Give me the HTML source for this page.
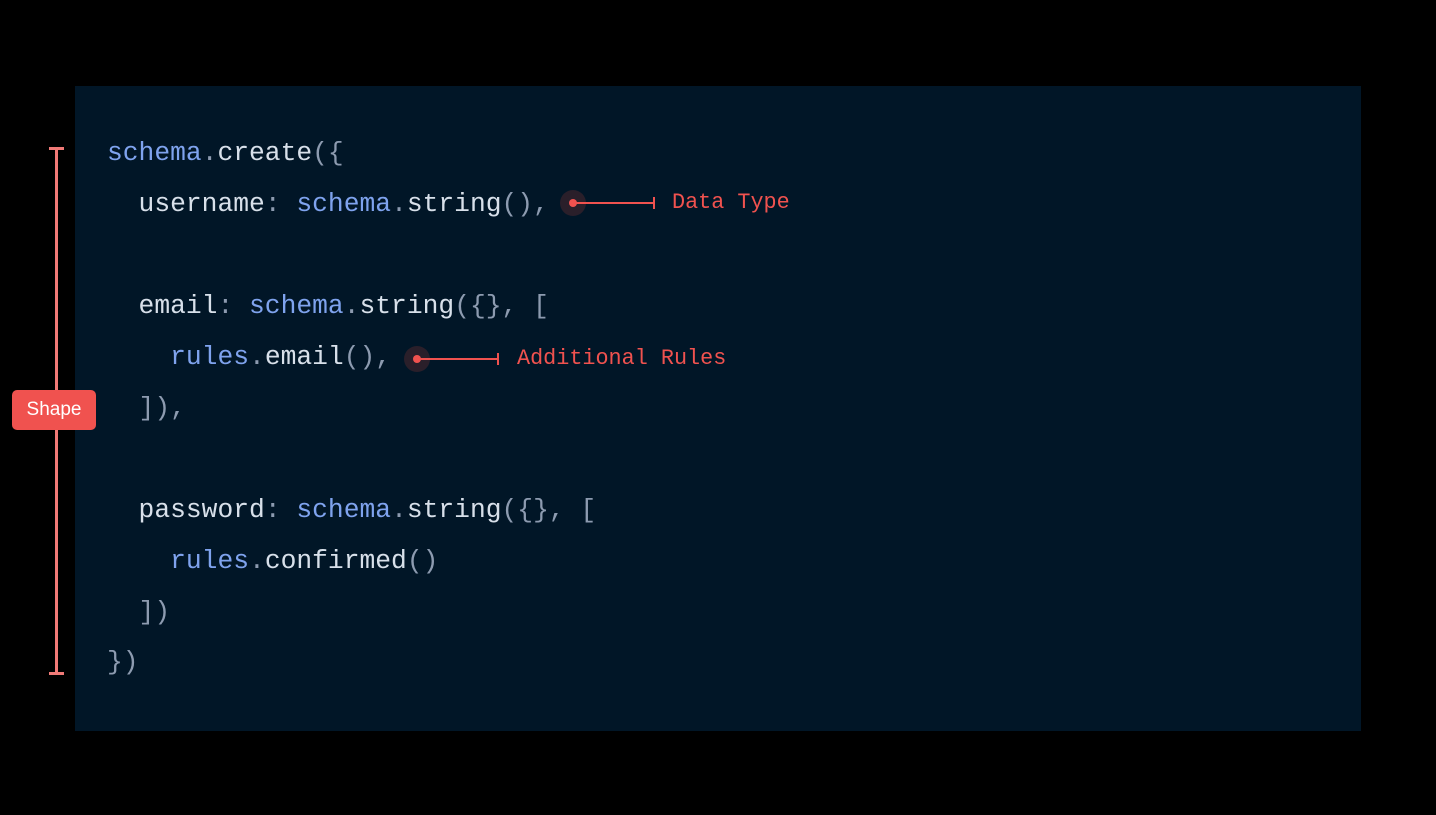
<!DOCTYPE html>
<html><head><meta charset="utf-8"><style>
html,body{margin:0;padding:0;background:#000;width:1436px;height:815px;overflow:hidden;position:relative}
.panel{position:absolute;left:75px;top:86px;width:1286px;height:645px;background:#011627}
.code{position:absolute;left:107px;top:1px;font-family:"Liberation Mono",monospace;font-size:26.3px;color:#d8e0ea;white-space:pre}
.l{position:absolute;left:0;height:51px;line-height:51px}
.b{color:#7fa3ee}.p{color:#8d9bb0}
.ann{position:absolute;font-family:"Liberation Mono",monospace;font-size:21.8px;color:#f0524f;white-space:pre;line-height:24px}
.dot{position:absolute;width:26px;height:26px;border-radius:50%;background:#2a1f2a}
.dot:after{content:"";position:absolute;left:9px;top:9px;width:8px;height:8px;border-radius:50%;background:#f0524f}
.ln{position:absolute;height:2px;background:#f0524f}
.tick{position:absolute;width:2px;height:12px;background:#f0524f}
.br{position:absolute;background:#f07a77}
.shape{position:absolute;left:12px;top:390px;width:84px;height:40px;border-radius:5px;background:#f0524f;color:#fff;font-family:"Liberation Sans",sans-serif;font-size:19px;line-height:40px;text-align:center}
</style></head><body>
<div class="panel"></div>
<div class="code">
<div class="l" style="top:127px"><span class="b">schema</span><span class="p">.</span>create<span class="p">({</span></div>
<div class="l" style="top:178px">  username<span class="p">:</span> <span class="b">schema</span><span class="p">.</span>string<span class="p">(),</span></div>
<div class="l" style="top:280px">  email<span class="p">:</span> <span class="b">schema</span><span class="p">.</span>string<span class="p">({}, [</span></div>
<div class="l" style="top:331px">    <span class="b">rules</span><span class="p">.</span>email<span class="p">(),</span></div>
<div class="l" style="top:382px"><span class="p">  ]),</span></div>
<div class="l" style="top:484px">  password<span class="p">:</span> <span class="b">schema</span><span class="p">.</span>string<span class="p">({}, [</span></div>
<div class="l" style="top:535px">    <span class="b">rules</span><span class="p">.</span>confirmed<span class="p">()</span></div>
<div class="l" style="top:586px"><span class="p">  ])</span></div>
<div class="l" style="top:636px"><span class="p">})</span></div>
</div>
<div class="dot" style="left:560px;top:190px"></div>
<div class="ln" style="left:573px;top:202px;width:82px"></div>
<div class="tick" style="left:653px;top:197px"></div>
<div class="ann" style="left:672px;top:191px">Data Type</div>
<div class="dot" style="left:404px;top:346px"></div>
<div class="ln" style="left:417px;top:358px;width:82px"></div>
<div class="tick" style="left:497px;top:353px"></div>
<div class="ann" style="left:517px;top:347px">Additional Rules</div>
<div class="br" style="left:55px;top:147px;width:3px;height:528px"></div>
<div class="br" style="left:49px;top:147px;width:15px;height:3px"></div>
<div class="br" style="left:49px;top:672px;width:15px;height:3px"></div>
<div class="shape">Shape</div>
</body></html>
